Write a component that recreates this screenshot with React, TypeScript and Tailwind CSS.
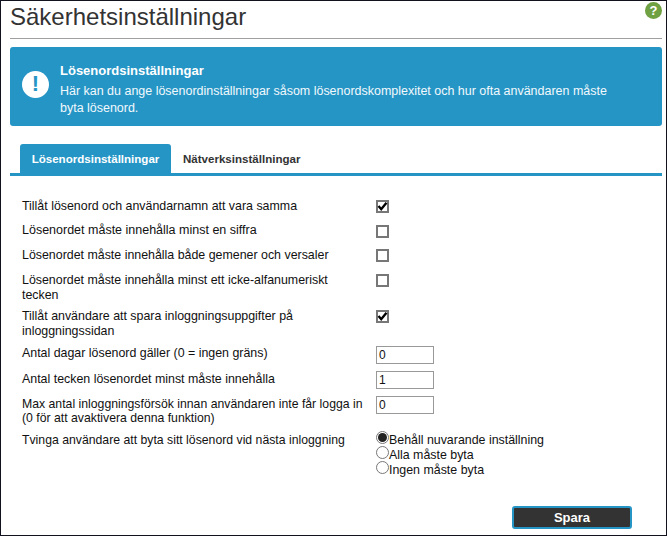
function Check({ on }: { on: boolean }) {
  return (
    <span className="mt-[6px] flex h-[13px] w-[13px] items-center justify-center border-2 border-[#777777] bg-white" role="checkbox" aria-checked={on}>
      {on && (
        <svg width="11" height="11" viewBox="0 0 11 11" className="shrink-0">
          <path d="M1.5 5 L4.2 8.2 L9.5 1.8" fill="none" stroke="#000" strokeWidth="2.4" />
        </svg>
      )}
    </span>
  );
}

function Radio({ on, label }: { on?: boolean; label: string }) {
  return (
    <div className="flex h-[15px] items-start">
      <span className="mt-[-2px] flex h-[13px] w-[13px] shrink-0 items-center justify-center rounded-full border border-[#777777] bg-white">
        {on && <span className="h-[9px] w-[9px] rounded-full bg-[#222222]" />}
      </span>
      <span className="leading-[15px]">{label}</span>
    </div>
  );
}

function Field({ value }: { value: string }) {
  return (
    <input
      readOnly
      defaultValue={value}
      className="h-[18px] w-[58px] border border-[#999999] bg-white pl-[2px] text-[12px] leading-[16px] text-[#111111] outline-none"
    />
  );
}

function Row({ h, pt, label, children }: { h: string; pt: string; label: React.ReactNode; children: React.ReactNode }) {
  return (
    <div className={`grid grid-cols-[354px_1fr] ${h}`}>
      <div className={`${pt} leading-[15px]`}>{label}</div>
      <div>{children}</div>
    </div>
  );
}

export default function App() {
  return (
    <div className="box-border h-[536px] w-[667px] overflow-hidden border border-[#12121f] bg-white pl-[9px] pr-[4px] font-['Liberation_Sans',Arial,sans-serif] text-[12.4px] text-[#111111]">
      <div className="flex h-[38px] items-start justify-between border-b border-[#a0a0a0]">
        <h1 className="pt-[1px] text-[24px] leading-[30px] font-normal text-[#333333]">Säkerhetsinställningar</h1>
        <span className="mt-[1px] flex h-[17px] w-[17px] items-center justify-center rounded-full bg-[#6fa042] text-[13px] font-bold leading-none text-white">?</span>
      </div>

      <div className="mt-[8px] flex h-[79px] items-center rounded-[3px] bg-[#2595c6] pl-[12px] pr-[50px] text-white">
        <span className="mb-[5px] flex h-[27px] w-[27px] shrink-0 items-center justify-center rounded-full bg-white text-[22px] font-bold leading-none text-[#2595c6]">!</span>
        <div className="ml-[11px] pt-[6px]">
          <div className="text-[13px] font-bold leading-[16px]">Lösenordsinställningar</div>
          <p className="mt-[4px] text-[12.47px] leading-[17px] text-[#f2f9fc]">Här kan du ange lösenordinställningar såsom lösenordskomplexitet och hur ofta användaren måste byta lösenord.</p>
        </div>
      </div>

      <div className="mt-[18px] flex h-[32px] items-start border-b-[3px] border-[#2595c6] pl-[10px] text-[11.55px] font-bold">
        <div className="flex h-[29px] w-[151px] items-center justify-center rounded-t-[3px] bg-[#2595c6] pt-[3px] text-white">Lösenordsinställningar</div>
        <div className="flex h-[29px] items-center pl-[12px] pt-[3px] text-[#333333]">Nätverksinställningar</div>
      </div>

      <div className="mt-[18px] pl-[12px]">
        <Row h="h-[25px]" pt="pt-[5px]" label="Tillåt lösenord och användarnamn att vara samma"><Check on /></Row>
        <Row h="h-[24px]" pt="pt-[4px]" label={<span className="text-[12.5px]">Lösenordet måste innehålla minst en siffra</span>}><Check on={false} /></Row>
        <Row h="h-[25px]" pt="pt-[5px]" label="Lösenordet måste innehålla både gemener och versaler"><Check on={false} /></Row>
        <Row h="h-[36px]" pt="pt-[5px]" label={<>Lösenordet måste innehålla minst ett icke-alfanumeriskt<br />tecken</>}><Check on={false} /></Row>
        <Row h="h-[37px]" pt="pt-[5px]" label={<>Tillåt användare att spara inloggningsuppgifter på<br />inloggningssidan</>}><Check on /></Row>
        <Row h="h-[25px]" pt="pt-[5px]" label="Antal dagar lösenord gäller (0 = ingen gräns)"><div className="pt-[5px]"><Field value="0" /></div></Row>
        <Row h="h-[25px]" pt="pt-[6px]" label="Antal tecken lösenordet minst måste innehålla"><div className="pt-[5px]"><Field value="1" /></div></Row>
        <Row h="h-[36px]" pt="pt-[6px]" label={<span className="block text-[12.25px] leading-[14px]">Max antal inloggningsförsök innan användaren inte får logga in<br />(0 för att avaktivera denna funktion)</span>}><div className="pt-[5px]"><Field value="0" /></div></Row>
        <Row h="h-[60px]" pt="pt-[6px]" label={<span className="text-[12.25px]">Tvinga användare att byta sitt lösenord vid nästa inloggning</span>}>
          <div className="pt-[6px]">
            <Radio on label="Behåll nuvarande inställning" />
            <Radio label="Alla måste byta" />
            <Radio label="Ingen måste byta" />
          </div>
        </Row>
      </div>

      <div className="mt-[19px] flex justify-end pr-[30px]">
        <button className="h-[23px] w-[120px] rounded-[3px] border-2 border-[#2595c6] bg-[#333333] text-[13px] font-bold leading-none text-white">Spara</button>
      </div>
    </div>
  );
}
